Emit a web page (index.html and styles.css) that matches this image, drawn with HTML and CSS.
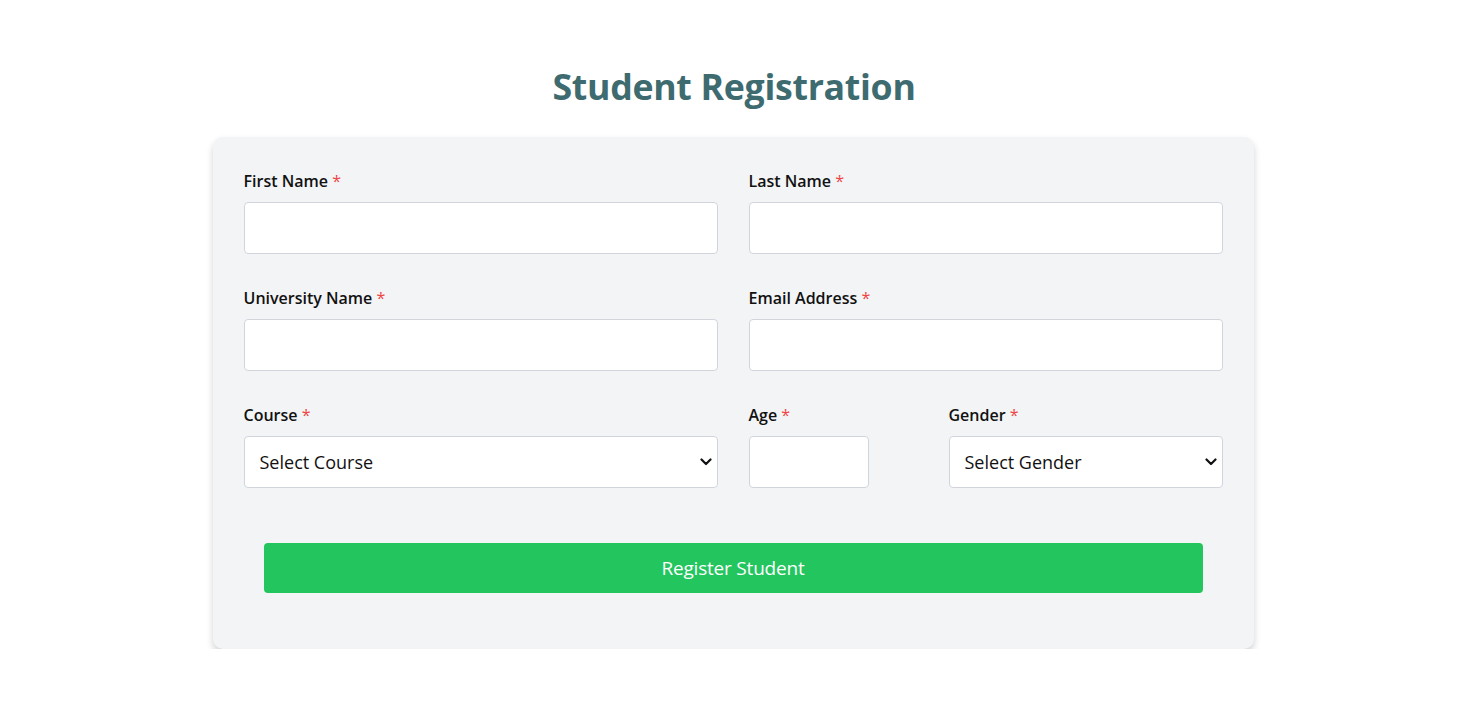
FILE: index.html
```html
<!DOCTYPE html>
<html lang="en">
<head>
<meta charset="utf-8">
<title>Student Registration</title>
<link rel="stylesheet" href="styles.css">
</head>
<body>
<main class="page">
  <h1 class="title">Student Registration</h1>
  <form class="card">
    <div class="grid">
      <div class="field">
        <label class="label">First Name <span class="req">*</span></label>
        <input class="input" type="text">
      </div>
      <div class="field">
        <label class="label">Last Name <span class="req">*</span></label>
        <input class="input" type="text">
      </div>
      <div class="field">
        <label class="label">University Name <span class="req">*</span></label>
        <input class="input" type="text">
      </div>
      <div class="field">
        <label class="label">Email Address <span class="req">*</span></label>
        <input class="input" type="email">
      </div>
      <div class="field">
        <label class="label">Course <span class="req">*</span></label>
        <div class="select-wrap">
          <select class="input select"><option>Select Course</option></select>
          <svg class="chev" viewBox="0 0 12 8" width="12" height="8"><path d="M1.5 1.5 L6 6 L10.5 1.5" fill="none" stroke="#111" stroke-width="2.2" stroke-linecap="round" stroke-linejoin="round"/></svg>
        </div>
      </div>
      <div class="split">
        <div class="field age">
          <label class="label">Age <span class="req">*</span></label>
          <input class="input age-input" type="number">
        </div>
        <div class="field gender">
          <label class="label">Gender <span class="req">*</span></label>
          <div class="select-wrap">
            <select class="input select"><option>Select Gender</option></select>
            <svg class="chev" viewBox="0 0 12 8" width="12" height="8"><path d="M1.5 1.5 L6 6 L10.5 1.5" fill="none" stroke="#111" stroke-width="2.2" stroke-linecap="round" stroke-linejoin="round"/></svg>
          </div>
        </div>
      </div>
    </div>
    <button class="btn" type="button">Register Student</button>
  </form>
</main>
</body>
</html>
```

FILE: styles.css
```css
* { box-sizing: border-box; }
html, body { margin: 0; padding: 0; background: #ffffff; }
body {
  font-family: "Open Sans", "Noto Sans", "Liberation Sans", sans-serif;
  color: #111111;
}
.page {
  display: flex;
  flex-direction: column;
  align-items: center;
  padding-top: 61px;
}
.title {
  margin: 0 0 26px;
  padding-left: 2px;
  font-size: 35.7px;
  font-weight: 700;
  line-height: 50px;
  color: #3e6b6f;
  letter-spacing: -0.3px;
}
.card {
  width: 1041px;
  background: #f3f4f6;
  border-radius: 10px;
  box-shadow: 0 4px 7px rgba(0,0,0,0.18);
  padding: 31px 31px 56px;
}
.grid {
  display: grid;
  grid-template-columns: 1fr 1fr;
  column-gap: 31px;
  row-gap: 31px;
}
.field {
  display: flex;
  flex-direction: column;
}
.label {
  font-size: 16px;
  font-weight: 600;
  line-height: 24px;
  margin-top: 1px;
  margin-bottom: 9px;
  letter-spacing: 0;
}
.req { color: #ef4444; font-weight: 400; }
.input {
  height: 52px;
  width: 100%;
  background: #ffffff;
  border: 1px solid #d1d5db;
  border-radius: 4px;
  font-family: inherit;
  font-size: 18px;
  color: #111;
  padding: 0 15px;
  outline: none;
}
.select-wrap { position: relative; }
.select {
  appearance: none;
  -webkit-appearance: none;
}
.chev {
  position: absolute;
  right: 6px;
  top: 22px;
  pointer-events: none;
}
.split {
  display: flex;
}
.age { width: 200px; }
.age-input { width: 120px; }
.gender { flex: 1; }
.btn {
  display: block;
  width: calc(100% - 40px);
  margin: 55px auto 0;
  height: 50px;
  background: #22c55e;
  color: #ffffff;
  border: none;
  border-radius: 4px;
  font-family: inherit;
  font-size: 19px;
  font-weight: 400;
  letter-spacing: -0.2px;
}
```
